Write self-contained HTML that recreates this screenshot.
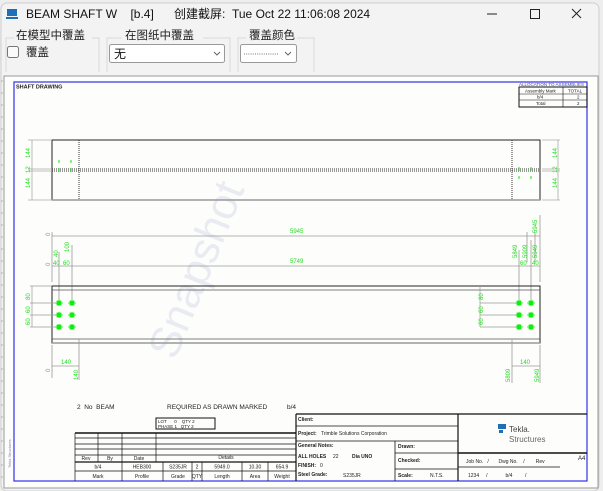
<!DOCTYPE html>
<html><head><meta charset="utf-8"><style>
body{margin:0;width:603px;height:491px;overflow:hidden;background:#f0f0f0;font-family:"Liberation Sans","Noto Sans CJK SC",sans-serif}
svg{display:block}
.g{fill:#22dd22;font-size:6px;font-family:"Liberation Sans",sans-serif}
.t{font-family:"Liberation Sans",sans-serif;fill:#222}
</style></head><body>
<svg width="603" height="491" xmlns="http://www.w3.org/2000/svg">
<rect x="0" y="0" width="603" height="491" fill="#eeeeee"/>
<rect x="1" y="3" width="598" height="488" rx="6" fill="#f3f3f3" stroke="#cfcfcf"/>
<!-- title bar -->
<rect x="7" y="9" width="10" height="7" fill="#1e6fb8"/><rect x="6" y="17" width="12" height="2" fill="#1e6fb8"/>
<text x="26" y="18" font-size="12" fill="#111" font-family="Liberation Sans,sans-serif">BEAM SHAFT W&#160;&#160;&#160;&#160;[b.4]</text>
<text x="174" y="18" font-size="12" fill="#111" font-family="Liberation Sans,Noto Sans CJK SC,sans-serif">创建截屏:&#160;&#160;Tue Oct 22 11:06:08 2024</text>
<line x1="487" y1="14" x2="497" y2="14" stroke="#222"/>
<rect x="530.5" y="9.5" width="9" height="9" fill="none" stroke="#222"/>
<path d="M572 9 L581 18 M581 9 L572 18" stroke="#222"/>
<!-- groups -->
<path d="M14 38 H6 V72 M99 72 V38 H92" fill="none" stroke="#d8d8d8"/>
<text x="16" y="39" font-size="11.5" fill="#222" font-family="Noto Sans CJK SC,sans-serif">在模型中覆盖</text>
<rect x="7.5" y="46.5" width="11" height="11" rx="2" fill="#fafafa" stroke="#777"/>
<text x="26" y="56" font-size="11.5" fill="#222" font-family="Noto Sans CJK SC,sans-serif">覆盖</text>
<path d="M122 38 H107 V72 M230 72 V38 H203" fill="none" stroke="#d8d8d8"/>
<text x="125" y="39" font-size="11.5" fill="#222" font-family="Noto Sans CJK SC,sans-serif">在图纸中覆盖</text>
<rect x="109.5" y="44.5" width="115" height="18" rx="2" fill="#fff" stroke="#999"/>
<text x="114" y="58" font-size="12" fill="#111" font-family="Noto Sans CJK SC,sans-serif">无</text>
<path d="M214 52 l3 3 l3 -3" fill="none" stroke="#666"/>
<path d="M246 38 H238 V72 M314 72 V38 H297" fill="none" stroke="#d8d8d8"/>
<text x="249" y="39" font-size="11.5" fill="#222" font-family="Noto Sans CJK SC,sans-serif">覆盖颜色</text>
<rect x="240.5" y="44.5" width="56" height="18" rx="2" fill="#fff" stroke="#999"/>
<line x1="244" y1="54" x2="278" y2="54" stroke="#777" stroke-dasharray="1 1.2"/>
<path d="M285 52 l3 3 l3 -3" fill="none" stroke="#666"/>
<!-- drawing panel -->
<rect x="4" y="76" width="594" height="412" fill="#fdfdfb" stroke="#999"/>
<line x1="2" y1="80" x2="2" y2="486" stroke="#bbb" stroke-dasharray="2 10"/>
<rect x="14" y="82" width="573" height="399" fill="none" stroke="#3030ee" stroke-width="1.2"/>
<text x="16" y="88.5" font-size="5.5" font-weight="bold" class="t">SHAFT DRAWING</text>
<!-- allocation -->
<text x="519" y="86" font-size="4.5" fill="#4444bb" font-family="Liberation Sans,sans-serif">ALLOCATION TO ASSEMBLIES</text>
<rect x="519" y="87" width="68" height="20" fill="none" stroke="#111" stroke-width="1"/>
<line x1="519" y1="94" x2="587" y2="94" stroke="#111" stroke-width=".6"/>
<line x1="519" y1="100" x2="587" y2="100" stroke="#111" stroke-width=".6"/>
<line x1="563" y1="87" x2="563" y2="107" stroke="#111" stroke-width=".6"/>
<text x="525" y="92.5" font-size="4.5" class="t">Assembly Mark</text><text x="568" y="92.5" font-size="4.5" class="t">TOTAL</text>
<text x="537" y="98.5" font-size="4.5" class="t">b/4</text><text x="577" y="98.5" font-size="4.5" class="t">2</text>
<text x="536" y="105" font-size="4.5" class="t">Total</text><text x="577" y="105" font-size="4.5" class="t">2</text>
<!-- watermark -->
<text x="0" y="0" transform="translate(210,275) rotate(-68)" font-size="44" fill="#e9ebf2" font-family="Liberation Sans,sans-serif" text-anchor="middle">Snapshot</text>
<!-- top view -->
<rect x="52" y="140" width="488" height="60" fill="none" stroke="#222" stroke-width="1"/>
<line x1="52" y1="200" x2="540" y2="200" stroke="#999" stroke-width="1.5"/>
<line x1="52" y1="169" x2="540" y2="169" stroke="#333" stroke-dasharray="1 1"/>
<line x1="52" y1="171" x2="540" y2="171" stroke="#333" stroke-dasharray="1 1"/>
<line x1="79" y1="140" x2="79" y2="200" stroke="#333" stroke-dasharray="1 1"/>
<line x1="512" y1="140" x2="512" y2="200" stroke="#333" stroke-dasharray="1 1"/>
<path d="M59 160v3M59 168v4M71 160v3M71 168v4M519 167v4M519 176v3M531 167v4M531 176v3" stroke="#22dd22"/>
<path d="M28 140H52M28 169H52M28 171H52M28 200H52M32 140V200M542 140H560M542 169H560M542 171H560M542 200H560M558 140V200" stroke="#aaa" stroke-width=".8"/>
<g class="g">
<text transform="translate(30,158) rotate(-90)">144</text><text transform="translate(30,173) rotate(-90)">12</text><text transform="translate(30,188) rotate(-90)">144</text>
<text transform="translate(557,158) rotate(-90)">144</text><text transform="translate(557,173) rotate(-90)">12</text><text transform="translate(557,188) rotate(-90)">144</text>
</g>
<!-- dims -->
<path d="M52 236H540M52 266H540M52 232V282M59 252V300M72 245V300M540 215V282M519 250V300M531 240V300M527 232V262M535 232V262" stroke="#999" stroke-width=".8"/>
<g class="g">
<text x="290" y="233">5945</text><text x="290" y="263">5749</text>
<text transform="translate(50,236) rotate(-90)">0</text><text transform="translate(50,266) rotate(-90)">0</text>
<text x="53" y="265">40</text><text x="63" y="265">60</text>
<text transform="translate(58,257) rotate(-90)">40</text><text transform="translate(69,252) rotate(-90)">100</text>
<text x="520" y="265">60</text><text x="532" y="265">40</text>
<text transform="translate(537,233) rotate(-90)">5945</text><text transform="translate(527,258) rotate(-90)">5909</text><text transform="translate(537,258) rotate(-90)">5949</text><text transform="translate(517,258) rotate(-90)">5849</text>
</g>
<!-- side view -->
<rect x="52" y="286" width="488" height="57" fill="none" stroke="#222" stroke-width="1"/>
<line x1="52" y1="290" x2="540" y2="290" stroke="#555" stroke-width=".7"/>
<line x1="52" y1="339" x2="540" y2="339" stroke="#555" stroke-width=".7"/>
<line x1="52" y1="343" x2="540" y2="343" stroke="#999" stroke-width="1.5"/>
<path d="M30 286H52M30 303H59M30 315H59M30 327H59M32 286V327M480 303H519M480 315H519M480 327H519M480 286V327" stroke="#999" stroke-width=".7"/>
<g fill="#11ee11" stroke="#11ee11" stroke-width=".8">
<rect x="57" y="301" width="4" height="4"/><rect x="70" y="301" width="4" height="4"/><rect x="57" y="313" width="4" height="4"/><rect x="70" y="313" width="4" height="4"/><rect x="57" y="325" width="4" height="4"/><rect x="70" y="325" width="4" height="4"/>
<rect x="517" y="301" width="4" height="4"/><rect x="529" y="301" width="4" height="4"/><rect x="517" y="313" width="4" height="4"/><rect x="529" y="313" width="4" height="4"/><rect x="517" y="325" width="4" height="4"/><rect x="529" y="325" width="4" height="4"/>
<path d="M55 303h8M68 303h8M55 315h8M68 315h8M55 327h8M68 327h8M59 300v6M72 300v6M59 312v6M72 312v6M59 324v6M72 324v6M515 303h8M527 303h8M515 315h8M527 315h8M515 327h8M527 327h8M519 300v6M531 300v6M519 312v6M531 312v6M519 324v6M531 324v6" fill="none"/>
</g>
<g class="g">
<text transform="translate(30,300) rotate(-90)">80</text><text transform="translate(30,313) rotate(-90)">60</text><text transform="translate(30,325) rotate(-90)">60</text>
<text transform="translate(483,300) rotate(-90)">80</text><text transform="translate(483,313) rotate(-90)">60</text><text transform="translate(483,325) rotate(-90)">60</text>
</g>
<path d="M79 339V345M512 339V345M52 345V378M79 345V380M512 345V383M540 345V383M52 366H79M512 366H540" stroke="#999" stroke-width=".8"/>
<g class="g">
<text x="61" y="364">140</text><text x="520" y="364">140</text>
<text transform="translate(50,372) rotate(-90)">0</text><text transform="translate(78,380) rotate(-90)">140</text>
<text transform="translate(510,382) rotate(-90)">5809</text><text transform="translate(539,382) rotate(-90)">5949</text>
</g>
<!-- notes -->
<text x="77" y="409" font-size="6.5" class="t">2&#160;&#160;No&#160;&#160;BEAM</text>
<text x="167" y="409" font-size="6.5" class="t">REQUIRED AS DRAWN MARKED</text>
<text x="287" y="409" font-size="6.5" class="t">b/4</text>
<rect x="156" y="418" width="59" height="11" fill="none" stroke="#111" stroke-width="1"/>
<text x="158" y="423" font-size="4.5" class="t">LOT&#160;&#160;&#160;&#160;&#160;&#160;0&#160;&#160;&#160;&#160;QTY 2</text>
<text x="158" y="428" font-size="4.5" class="t">PHASE 1&#160;&#160;&#160;QTY 2</text>
<!-- left table -->
<g stroke="#111" fill="none">
<path d="M75 433H296" stroke-width="1.5"/>
<path d="M75 433V481M75 438H296M75 444H296M75 449H296M75 455H296" stroke-width=".7"/>
<path d="M75 462H296" stroke-width="1.2"/>
<path d="M75 471H296" stroke-width=".7"/>
<path d="M98 433V462M122 433V481M156 433V462M163 462V481M192 462V481M202 462V481M242 462V481M268 462V481" stroke-width=".7"/>
</g>
<g font-size="5" class="t" text-anchor="middle">
<text x="86" y="460">Rev</text><text x="110" y="460">By</text><text x="139" y="460">Date</text><text x="226" y="459">Details</text>
<text x="98" y="468.5">b/4</text><text x="142" y="468.5">HEB300</text><text x="178" y="468.5">S235JR</text><text x="197" y="468.5">2</text><text x="222" y="468.5">5949.0</text><text x="255" y="468.5">10.30</text><text x="282" y="468.5">654.9</text>
<text x="98" y="478">Mark</text><text x="142" y="478">Profile</text><text x="178" y="478">Grade</text><text x="197" y="478">QTY</text><text x="222" y="478">Length</text><text x="255" y="478">Area</text><text x="282" y="478">Weight</text>
</g>
<!-- right title block -->
<g stroke="#111" fill="none">
<path d="M296 414H587M296 414V481M458 414V481" stroke-width="1.2"/>
<path d="M296 426H458M296 441H458M395 441V481M395 453H458M395 469H458" stroke-width=".8"/>
<path d="M458 453H587" stroke-width="1.5"/>
<path d="M458 467H560" stroke-width=".8"/>
</g>
<g font-size="5" class="t">
<text x="298" y="421" font-weight="bold">Client:</text>
<text x="298" y="435" font-weight="bold">Project:</text><text x="321" y="435">Trimble Solutions Corporation</text>
<text x="298" y="447" font-weight="bold">General Notes:</text>
<text x="298" y="458" font-weight="bold">ALL HOLES</text><text x="333" y="458">22</text><text x="352" y="458" font-weight="bold">Dia UNO</text>
<text x="298" y="467" font-weight="bold">FINISH:</text><text x="320" y="467">0</text>
<text x="298" y="476" font-weight="bold">Steel Grade:</text><text x="343" y="477">S235JR</text>
<text x="398" y="448" font-weight="bold">Drawn:</text>
<text x="398" y="462" font-weight="bold">Checked:</text>
<text x="398" y="477" font-weight="bold">Scale:</text><text x="430" y="477">N.T.S.</text>
<text x="466" y="463">Job No.&#160;&#160;&#160;/&#160;&#160;&#160;&#160;&#160;&#160;&#160;Dwg No.&#160;&#160;&#160;&#160;/&#160;&#160;&#160;&#160;&#160;&#160;&#160;&#160;Rev</text>
<text x="468" y="477">1234&#160;&#160;&#160;&#160;&#160;/&#160;&#160;&#160;&#160;&#160;&#160;&#160;&#160;&#160;&#160;&#160;&#160;&#160;b/4&#160;&#160;&#160;&#160;&#160;&#160;&#160;&#160;&#160;/</text>
<text x="578" y="460" font-size="6">A4</text>
</g>
<rect x="498" y="424" width="8" height="5" fill="#1e6fb8"/><rect x="499" y="430" width="4" height="3" fill="#1e6fb8"/>
<text x="509" y="432" font-size="8" fill="#444" font-family="Liberation Sans,sans-serif">Tekla.</text>
<text x="509" y="442" font-size="8" fill="#666" font-family="Liberation Sans,sans-serif">Structures</text>
<text transform="translate(11,468) rotate(-90)" font-size="4" fill="#8888bb" font-family="Liberation Sans,sans-serif">Tekla Structures</text>
</svg>
</body></html>
